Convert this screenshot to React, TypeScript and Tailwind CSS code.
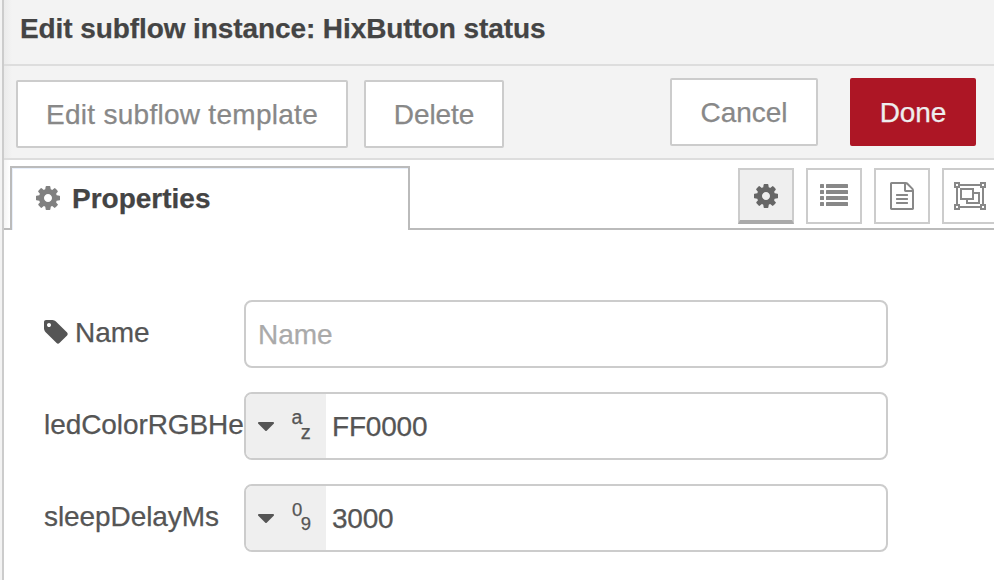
import type { ReactNode } from "react";

const COG =
  "M1024 640q0-106-75-181t-181-75-181 75-75 181 75 181 181 75 181-75 75-181zm512-109v222q0 12-8 23t-20 13l-185 28q-19 54-39 91 35 50 107 138 10 12 10 25t-9 23q-27 37-99 108t-94 71q-12 0-26-9l-138-108q-44 23-91 38-16 136-29 186-7 28-36 28h-222q-14 0-24.5-8.5t-11.5-21.5l-28-184q-49-16-90-37l-141 107q-10 9-25 9-14 0-25-11-126-114-165-168-7-10-7-23 0-12 8-23 15-21 51-66.5t54-70.5q-27-50-41-99l-183-27q-13-2-21-12.5t-8-23.5v-222q0-12 8-23t19-13l186-28q14-46 39-92-40-57-107-138-10-12-10-24 0-10 9-23 26-36 98.5-107.5t94.5-71.5q13 0 26 10l138 107q44-23 91-38 16-136 29-186 7-28 36-28h222q14 0 24.5 8.5t11.5 21.5l28 184q49 16 90 37l142-107q9-9 24-9 13 0 25 10 129 119 165 170 7 8 7 22 0 12-8 23-15 21-51 66.5t-54 70.5q26 50 41 98l183 28q13 2 21 12.500t8 23.500z";
const FILE =
  "M1468 380q28 28 48 76t20 88v1152q0 40-28 68t-68 28h-1344q-40 0-68-28t-28-68v-1600q0-40 28-68t68-28h896q40 0 88 20t76 48zm-444-244v376h376q-10-29-22-41l-313-313q-12-12-41-22zm384 1528v-1024h-416q-40 0-68-28t-28-68v-416h-768v1536h1280zm-1024-864q0-14 9-23t23-9h704q14 0 23 9t9 23v64q0 14-9 23t-23 9h-704q-14 0-23-9t-9-23v-64zm736 224q14 0 23 9t9 23v64q0 14-9 23t-23 9h-704q-14 0-23-9t-9-23v-64q0-14 9-23t23-9h704zm0 256q14 0 23 9t9 23v64q0 14-9 23t-23 9h-704q-14 0-23-9t-9-23v-64q0-14 9-23t23-9h704z";
const GROUP =
  "M2048 384h-128v1024h128v384h-384v-128h-1280v128h-384v-384h128v-1024h-128v-384h384v128h1280v-128h384zM1792 128v128h128v-128zM128 128v128h128v-128zM256 1664v-128h-128v128zM1664 1536v-128h128v-1024h-128v-128h-1280v128h-128v1024h128v128zM1920 1664v-128h-128v128zM384 384h896v768h-896zM512 512v512h640v-512zM1664 640v768h-896v-256h128v128h640v-512h-256v-128z";
const TAG =
  "M448 448q0-53-37.5-90.5t-90.5-37.5-90.5 37.5-37.5 90.5 37.5 90.5 90.5 37.5 90.5-37.5 37.5-90.5zm1067 576q0 53-37 90l-491 492q-39 37-91 37-53 0-90-37l-715-716q-38-37-64.5-101t-26.500-117v-416q0-52 38-90t90-38h416q53 0 117 26.500t102 64.500l715 714q37 39 37 91z";
const CARET =
  "M1024 448q0 26-19 45l-448 448q-19 19-45 19t-45-19l-448-448q-19-19-19-45t19-45 45-19h896q26 0 45 19t19 45z";

function Cog({ className }: { className: string }) {
  return (
    <svg viewBox="0 -128 1536 1536" className={className} fill="currentColor">
      <path fillRule="evenodd" d={COG} />
    </svg>
  );
}

function ListIcon() {
  return (
    <svg viewBox="0 0 28 22" className="mr-px mb-0.5 h-[22px] w-7" fill="currentColor">
      {[0, 6, 12, 18].map((y) => (
        <g key={y}>
          <rect x="0" y={y} width="4" height="4" rx="0.5" />
          <rect x="6" y={y} width="22" height="4" rx="0.5" />
        </g>
      ))}
    </svg>
  );
}

function Action({ className, children }: { className: string; children: ReactNode }) {
  return (
    <button className={`flex h-[68px] shrink-0 items-center justify-center rounded-[2px] border-2 pt-0.5 text-[28px] leading-none ${className}`}>
      {children}
    </button>
  );
}

function TabButton({ className, children }: { className: string; children: ReactNode }) {
  return (
    <button className={`flex h-14 w-14 shrink-0 items-center justify-center border-2 border-[#ccc] ${className}`}>{children}</button>
  );
}

function TypedField({ label, value, children }: { label: string; value: string; children: ReactNode }) {
  return (
    <div className="flex h-[68px]">
      <label className="h-[68px] w-[200px] shrink-0 text-[28px] leading-[65px] tracking-[-0.08px] whitespace-nowrap">{label}</label>
      <div className="flex w-[644px] overflow-hidden rounded-lg border-2 border-[#ccc] bg-white">
        <button className="flex w-20 shrink-0 bg-[#efefef] pl-3">
          <svg viewBox="0 384 1024 576" className="mt-7 h-[9px] w-4" fill="currentColor">
            <path d={CARET} />
          </svg>
          {children}
        </button>
        <input className="min-w-0 flex-1 pt-0.5 pl-1.5 text-[28px] tracking-[-0.2px] outline-none" defaultValue={value} />
      </div>
    </div>
  );
}

export default function App() {
  return (
    <div className="flex h-[580px] w-[994px] overflow-hidden bg-[#f3f3f3] font-['Liberation_Sans',Arial,sans-serif] text-[#555] [-webkit-text-stroke:0.25px_currentColor]">
      <div className="w-1 shrink-0 border-r-2 border-[#ccc]" />
      <main className="flex w-[990px] shrink-0 flex-col bg-white">
        <header className="flex h-[66px] shrink-0 border-b-2 border-[#ddd] bg-[#f3f3f3] bg-[linear-gradient(to_right,#ebebeb,#f3f3f3_8px)] pl-4">
          <h1 className="text-[28px] leading-[57px] font-bold tracking-[-0.09px] text-[#444]">
            Edit subflow instance: HixButton status
          </h1>
        </header>

        <div className="flex h-[94px] shrink-0 border-b-2 border-[#ddd] bg-[#f3f3f3] bg-[linear-gradient(to_right,#ebebeb,#f3f3f3_8px)] pt-3 pl-3">
          <Action className="mt-0.5 w-[332px] border-[#ccc] bg-white tracking-[0.28px] text-[#888]">Edit subflow template</Action>
          <Action className="mt-0.5 ml-4 w-[140px] border-[#ccc] bg-white tracking-[-0.1px] text-[#888]">Delete</Action>
          <Action className="ml-[166px] w-[148px] border-[#ccc] bg-white text-[#888]">Cancel</Action>
          <Action className="ml-8 w-[126px] border-[#ad1625] bg-[#ad1625] tracking-[-0.1px] text-[#eee]">Done</Action>
        </div>

        <div className="flex h-[70px] shrink-0">
          <div className="w-1.5 shrink-0 border-b-2 border-[#bbb] bg-[linear-gradient(to_right,#f5f5f5,#fff)]" />
          <div className="mt-1.5 flex w-[400px] shrink-0 border-x-2 border-t-2 border-[#bbb] pt-[18px] pl-6 shadow-[inset_1px_1px_0_#e9f0fb]">
            <Cog className="h-6 w-6 text-[#808080]" />
            <span className="-mt-[1px] ml-3 text-[28px] leading-[27px] font-bold text-[#444]">Properties</span>
          </div>
          <div className="flex min-w-0 flex-1 gap-3 overflow-hidden border-b-2 border-[#bbb] pt-2 pl-[328px] text-[#888]">
            <TabButton className="border-b-4 border-b-[#aaa] bg-[#efefef] pt-0.5 pr-px text-[#666]">
              <Cog className="h-6 w-6" />
            </TabButton>
            <TabButton className="bg-white">
              <ListIcon />
            </TabButton>
            <TabButton className="bg-white">
              <svg viewBox="0 0 1536 1792" className="h-7 w-6" fill="currentColor">
                <path fillRule="evenodd" d={FILE} />
              </svg>
            </TabButton>
            <TabButton className="bg-white">
              <svg viewBox="0 0 2048 1792" className="mr-px h-7 w-8 shrink-0" fill="currentColor">
                <path fillRule="evenodd" d={GROUP} />
              </svg>
            </TabButton>
          </div>
        </div>

        <form className="flex flex-col gap-6 pt-[70px] pl-10">
          <div className="flex h-[68px]">
            <label className="flex w-[200px] shrink-0 text-[28px] leading-[65px]">
              <svg viewBox="0 128 1536 1536" className="mt-5 mr-[7px] h-6 w-6" fill="currentColor">
                <path fillRule="evenodd" d={TAG} />
              </svg>
              Name
            </label>
            <input
              className="w-[644px] rounded-lg border-2 border-[#ccc] bg-white px-3 pt-0.5 text-[28px] outline-none placeholder:text-[#aaa]"
              placeholder="Name"
            />
          </div>
          <TypedField label="ledColorRGBHe" value="FF0000">
            <span className="mt-3 ml-[17.5px] text-[19.5px] leading-[22px]">a</span>
            <span className="mt-[27px] -ml-[1.5px] text-[20px] leading-[22px]">z</span>
          </TypedField>
          <TypedField label="sleepDelayMs" value="3000">
            <span className="mt-[13px] ml-[18px] text-[18.5px] leading-[22px]">0</span>
            <span className="mt-[27px] -ml-[1.5px] text-[18.5px] leading-[22px]">9</span>
          </TypedField>
        </form>
      </main>
    </div>
  );
}
